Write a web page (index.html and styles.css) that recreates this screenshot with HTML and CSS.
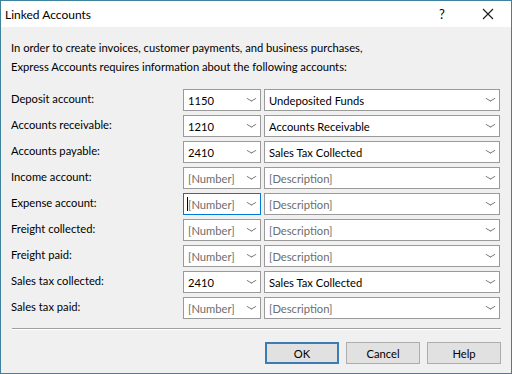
FILE: index.html
```html
<!DOCTYPE html>
<html>
<head>
<meta charset="utf-8">
<link rel="stylesheet" href="styles.css">
</head>
<body>
<div class="window">
  <div class="titlebar">
    <span class="title">Linked Accounts</span>
    <span class="help-btn">?</span>
    <span class="close-btn">
      <svg width="12" height="12" viewBox="0 0 12 12"><path d="M1 1 L11 11 M11 1 L1 11" stroke="#1a1a1a" stroke-width="1.1" fill="none"/></svg>
    </span>
  </div>
  <div class="body">
    <p class="intro">In order to create invoices, customer payments, and business purchases,<br>Express Accounts requires information about the following accounts:</p>
    <div class="grid">
      <div class="label">Deposit account:</div>
      <div class="combo num"><span class="val">1150</span><span class="chev"></span></div>
      <div class="combo desc"><span class="val">Undeposited Funds</span><span class="chev"></span></div>

      <div class="label">Accounts receivable:</div>
      <div class="combo num"><span class="val">1210</span><span class="chev"></span></div>
      <div class="combo desc"><span class="val">Accounts Receivable</span><span class="chev"></span></div>

      <div class="label">Accounts payable:</div>
      <div class="combo num"><span class="val">2410</span><span class="chev"></span></div>
      <div class="combo desc"><span class="val">Sales Tax Collected</span><span class="chev"></span></div>

      <div class="label">Income account:</div>
      <div class="combo num"><span class="val ph">[Number]</span><span class="chev"></span></div>
      <div class="combo desc"><span class="val ph">[Description]</span><span class="chev"></span></div>

      <div class="label">Expense account:</div>
      <div class="combo num focus"><span class="val ph"><span class="caret"></span>[Number]</span><span class="chev"></span></div>
      <div class="combo desc"><span class="val ph">[Description]</span><span class="chev"></span></div>

      <div class="label">Freight collected:</div>
      <div class="combo num"><span class="val ph">[Number]</span><span class="chev"></span></div>
      <div class="combo desc"><span class="val ph">[Description]</span><span class="chev"></span></div>

      <div class="label">Freight paid:</div>
      <div class="combo num"><span class="val ph">[Number]</span><span class="chev"></span></div>
      <div class="combo desc"><span class="val ph">[Description]</span><span class="chev"></span></div>

      <div class="label">Sales tax collected:</div>
      <div class="combo num"><span class="val">2410</span><span class="chev"></span></div>
      <div class="combo desc"><span class="val">Sales Tax Collected</span><span class="chev"></span></div>

      <div class="label">Sales tax paid:</div>
      <div class="combo num"><span class="val ph">[Number]</span><span class="chev"></span></div>
      <div class="combo desc"><span class="val ph">[Description]</span><span class="chev"></span></div>
    </div>
    <div class="sep"></div>
    <div class="buttons">
      <div class="btn default">OK</div>
      <div class="btn">Cancel</div>
      <div class="btn">Help</div>
    </div>
  </div>
</div>
</body>
</html>
```

FILE: styles.css
```css
html, body {
  margin: 0;
  padding: 0;
  background: #ffffff;
}
body {
  font-family: "Lato", "Open Sans", "Liberation Sans", sans-serif;
  font-size: 11.2px;
  color: #000;
}
.window {
  width: 510px;
  height: 372px;
  border: 1px solid #3f829e;
  display: flex;
  flex-direction: column;
  background: #f0f0f0;
}
.titlebar {
  height: 26px;
  background: #ffffff;
  display: flex;
  align-items: center;
  padding-left: 4px;
}
.title {
  flex: 1;
  font-size: 12px;
  color: #000;
}
.help-btn {
  width: 46px;
  text-align: center;
  font-size: 13px;
}
.close-btn {
  width: 46px;
  height: 26px;
  display: flex;
  align-items: center;
  justify-content: center;
}
.body {
  flex: 1;
  padding: 11px 10px 0 10px;
  display: flex;
  flex-direction: column;
}
.intro {
  margin: 0;
  line-height: 19px;
}
.grid {
  margin-top: 13px;
  display: grid;
  grid-template-columns: 169px 78px 236px;
  column-gap: 3px;
  row-gap: 4px;
}
.label {
  display: flex;
  align-items: center;
  height: 19px;
}
.combo {
  height: 20px;
  border: 1px solid #9a9a9a;
  background: #ffffff;
  display: flex;
  align-items: center;
}
.combo.focus {
  border-color: #0078d7;
}
.val {
  flex: 1;
  padding-left: 4px;
  white-space: nowrap;
  display: flex;
  align-items: center;
}
.val.ph {
  color: #6d6d6d;
}
.caret {
  display: inline-block;
  width: 1px;
  height: 14px;
  background: #000;
  margin-left: -1px;
}
.chev {
  width: 6px;
  height: 6px;
  margin-right: 5px;
  margin-top: -3px;
  border-right: 1px solid #707070;
  border-bottom: 1px solid #707070;
  transform: scaleY(0.6) rotate(45deg);
}
.sep {
  margin-top: 9px;
  margin-left: 1px;
  height: 0;
  border-top: 1px solid #a0a0a0;
  border-bottom: 1px solid #ffffff;
}
.buttons {
  margin-top: 12px;
  display: flex;
  justify-content: flex-end;
  gap: 7px;
}
.btn {
  width: 72px;
  height: 20px;
  border: 1px solid #adadad;
  background: #e1e1e1;
  display: flex;
  align-items: center;
  justify-content: center;
}
.btn.default {
  border: 2px solid #3b7cb2;
  width: 70px;
  height: 18px;
}
```
